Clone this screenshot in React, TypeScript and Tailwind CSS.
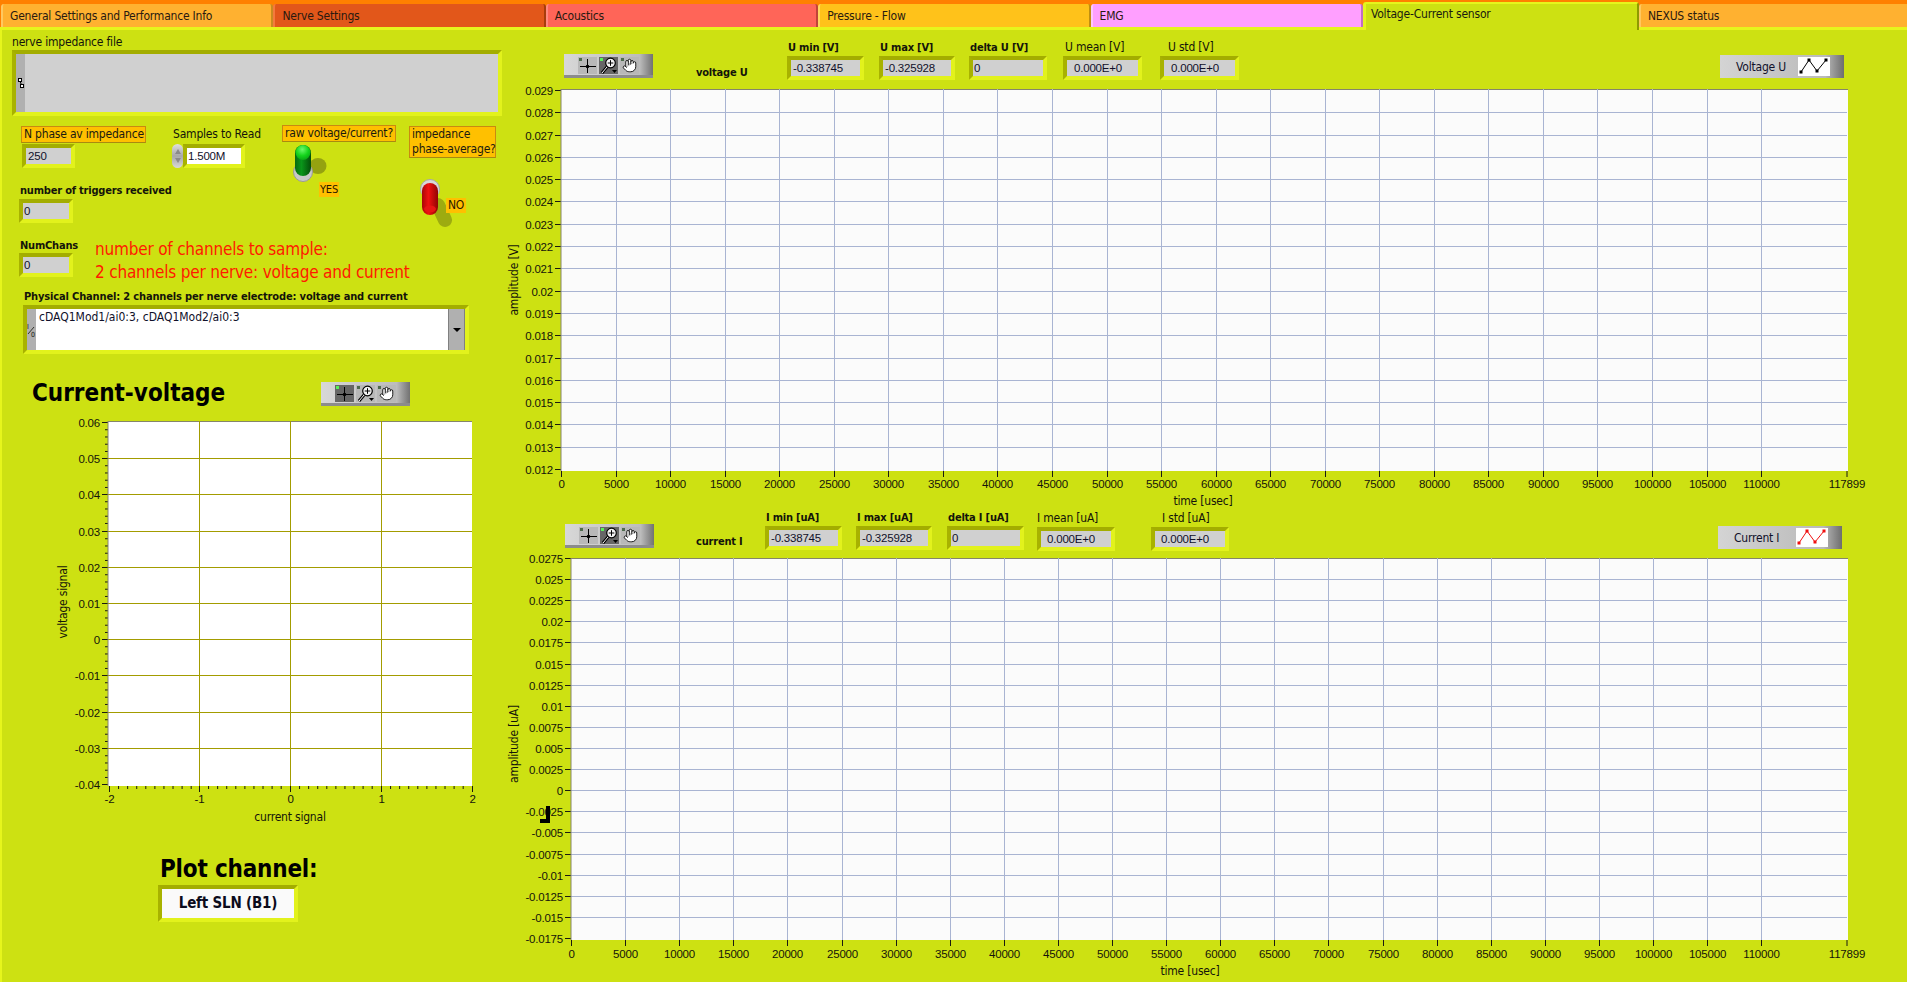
import { Hand } from "lucide-react"
import type { ReactNode } from "react"

const tabs = [
  { name: "General Settings and Performance Info", cls: "bg-[#ffb130] border-l-[#ffc860] border-r-[#c98a20]" },
  { name: "Nerve Settings", cls: "bg-[#e2571a] border-l-[#f47a3c] border-r-[#a83c0c]" },
  { name: "Acoustics", cls: "bg-[#ff6558] border-l-[#ff8a80] border-r-[#c04438]" },
  { name: "Pressure - Flow", cls: "bg-[#ffc21a] border-l-[#ffd860] border-r-[#c08f10]" },
  { name: "EMG", cls: "bg-[#ff9fff] border-l-[#ffc8ff] border-r-[#c070c0]" },
  { name: "Voltage-Current sensor", cls: "" },
  { name: "NEXUS status", cls: "bg-[#ffb130] border-l-[#ffc860] border-r-[#ffb130]" },
]

const digits = "font-['Liberation_Sans',sans-serif] font-stretch-normal"

function Tab({ name, cls }: { name: string; cls: string }) {
  if (!cls) {
    return (
      <div className="relative z-10 -mt-[2px] -mb-[3px] h-[28px] w-[276px] shrink-0 rounded-t-[3px] border-t-[2px] border-l-[3px] border-r-[2px] border-t-[#e6f51c] border-l-[#e6f51c] border-r-[#8f9a00] bg-[#cde112] pl-[5px] pt-[1px] text-[12px] leading-[18px] text-[#1a1a10]">
        {name}
      </div>
    )
  }
  return (
    <div className={"h-[23px] w-[272.4px] shrink-0 rounded-t-[3px] border-l-[2px] border-r-[2px] pl-[7px] pt-[4px] text-[12px] leading-[16px] text-[#2a1a10] " + cls}>
      {name}
    </div>
  )
}

// recessed LabVIEW frame, dark on top/left and light on bottom/right
function Frame({ className, children }: { className: string; children?: ReactNode }) {
  return (
    <div className={"flex border-[4px] border-t-[#a3ad00] border-l-[#a8b200] border-r-[#e2f21c] border-b-[#e2f21c] " + className}>
      {children}
    </div>
  )
}

function Num({ value, className, pad = "pl-[1px]" }: { value: string; className: string; pad?: string }) {
  return (
    <Frame className={className}>
      <div className={"h-full w-full bg-[#d0d0d0] text-[11.5px] leading-[16px] text-[#10102a] " + digits + " " + pad}>{value}</div>
    </Frame>
  )
}

function OrangeLabel({ className, children }: { className: string; children: ReactNode }) {
  return (
    <div className={"whitespace-nowrap border border-[#c98a10] border-b-[#a88a10] bg-[#ffc000] pl-[2px] text-[12px] leading-[15px] text-[#1a1a10] " + className}>
      {children}
    </div>
  )
}

function Crosshair() {
  return (
    <svg width="17" height="15" viewBox="0 0 17 15">
      <path d="M8.5 1V15M1 8.5H17" stroke="#000" strokeWidth="1" />
      <circle cx="8.5" cy="8.5" r="1.8" fill="#000" />
    </svg>
  )
}

function Magnifier() {
  return (
    <svg width="18" height="17" viewBox="0 0 18 17">
      <line x1="7" y1="10" x2="2" y2="16" stroke="#000" strokeWidth="3" />
      <line x1="7" y1="10" x2="2" y2="16" stroke="#fff" strokeWidth="1" />
      <circle cx="10.5" cy="6" r="4.8" fill="#f4f4f4" stroke="#000" strokeWidth="1.2" />
      <path d="M10.5 3.2V8.8M7.7 6H13.3" stroke="#000" strokeWidth="1" />
      <path d="M12 13H17L14.5 16Z" fill="#000" />
    </svg>
  )
}

function Palette({ active, className = "" }: { active: number; className?: string }) {
  const btn = (i: number) =>
    "relative flex h-[17px] w-[19px] items-center justify-center " +
    (active === i ? "bg-[#666666]" : "bg-[#b8b8b8]")
  const dot = (i: number) =>
    "absolute top-[1px] left-[1px] h-[3px] w-[3px] " + (active === i ? "bg-[#5bf05b]" : "bg-[#4e6a4e]")
  return (
    <div className={"flex h-[24px] w-[89px] shrink-0 items-center gap-[2px] border-b-[3px] border-b-[#8c8c8c] bg-linear-to-r from-[#d8d8d8] via-[#bcbcbc] via-85% to-[#727272] pl-[14px] pt-[2px] " + className}>
      <div className={btn(0)}><span className={dot(0)} /><Crosshair /></div>
      <div className={btn(1)}><span className={dot(1)} /><Magnifier /></div>
      <div className={btn(2)}><span className={dot(2)} /><Hand size={15} strokeWidth={1.4} color="#000" fill="#fff" /></div>
    </div>
  )
}

function Legend({ name, color, className }: { name: string; color: string; className: string }) {
  return (
    <div className={"flex h-[23px] w-[124px] shrink-0 items-center bg-linear-to-r from-[#d4d4d4] via-[#bababa] via-85% to-[#6e6e6e] pl-[16px] text-[12px] text-[#10102a] " + className}>
      <span className="w-[62px] whitespace-nowrap">{name}</span>
      <svg width="32" height="19" viewBox="0 0 32 19" className="bg-white">
        <polyline points="3,15 11,3 19,14 28,3" fill="none" stroke={color} strokeWidth="1" />
        {[[3, 15], [11, 3], [19, 14], [28, 3]].map(([x, y]) => (
          <rect key={x} x={x - 1.5} y={y - 1.5} width="3" height="3" fill={color} />
        ))}
      </svg>
    </div>
  )
}

function Stat({ label, value, bold, className, labelCls = "", valueCls, pad }: {
  label: string; value: string; bold?: boolean; className: string; labelCls?: string; valueCls: string; pad?: string
}) {
  return (
    <div className={"shrink-0 " + className}>
      <div className={"h-[16px] whitespace-nowrap leading-[15px] text-[#14140a] " + (bold ? "text-[11px] font-bold " : "text-[12px] ") + labelCls}>{label}</div>
      <Num value={value} className={valueCls} pad={pad} />
    </div>
  )
}

function TimeChart({ oy, h, left, top, bottom, tickTop, tickBottom, px5000, yLabels, yTitle, titleY, timeX, timeY, labelY }: {
  oy: number; h: number; left: number; top: number; bottom: number; tickTop: number; tickBottom: number
  px5000: number; yLabels: string[]; yTitle: string; titleY: number; timeX: number; timeY: number; labelY: number
}) {
  const right = 1847
  const xs = Array.from({ length: 23 }, (_, i) => i * 5000)
  const xPos = (v: number) => Math.round(left + (v / 5000) * px5000)
  const step = (tickBottom - tickTop) / (yLabels.length - 1)
  return (
    <svg width="1407" height={h} viewBox={`500 ${oy} 1407 ${h}`} className="-ml-[10px] block shrink-0 text-[#14140a]">
      <rect x={left} y={top} width={right - left + 1} height={bottom - top} fill="#fbfbfb" />
      <line x1={left} x2={right + 1} y1={top + 0.5} y2={top + 0.5} stroke="#85856a" />
      <g className={digits}>
        {yLabels.map((l, i) => {
          const y = Math.round(tickTop + i * step) + 0.5
          return (
            <g key={l}>
              {i > 0 && i < yLabels.length - 1 && <line x1={left} x2={right} y1={y} y2={y} stroke="#a9b4d2" />}
              <line x1={left - 6} x2={left} y1={y} y2={y} stroke="#1a1a10" />
              <text x={left - 8} y={y + 4} textAnchor="end" fontSize="11.5" fill="currentColor">{l}</text>
            </g>
          )
        })}
        {xs.map((v) => {
          const x = xPos(v) + 0.5
          return (
            <g key={v}>
              {v > 0 && <line x1={x} x2={x} y1={top} y2={bottom} stroke="#a9b4d2" />}
              <line x1={x} x2={x} y1={bottom} y2={bottom + 6} stroke="#1a1a10" />
              {v < 115000 && <text x={x} y={labelY} textAnchor="middle" fontSize="11.5" fill="currentColor">{v}</text>}
            </g>
          )
        })}
        <line x1={right} x2={right} y1={bottom} y2={bottom + 6} stroke="#1a1a10" />
        <text x={right} y={labelY} textAnchor="middle" fontSize="11.5" fill="currentColor">117899</text>
      </g>
      <line x1={left} x2={left} y1={top} y2={bottom} stroke="#85856a" />
      <text x={timeX} y={timeY} textAnchor="middle" fontSize="12" fill="currentColor">time [usec]</text>
      <text transform={`translate(518 ${titleY}) rotate(-90)`} textAnchor="middle" fontSize="12" fill="currentColor">{yTitle}</text>
    </svg>
  )
}

function XYChart() {
  const left = 108, right = 472, top = 421, bottom = 786
  const ys = ["0.06", "0.05", "0.04", "0.03", "0.02", "0.01", "0", "-0.01", "-0.02", "-0.03", "-0.04"]
  const xs = ["-2", "-1", "0", "1", "2"]
  const xStep = 90.75, yStep = 36.2
  return (
    <svg width="508" height="422" viewBox="2 408 508 422" className="block text-[#14140a]">
      <rect x={left} y={top} width={right - left} height={bottom - top} fill="#ffffff" />
      <line x1={left} x2={right} y1={top + 0.5} y2={top + 0.5} stroke="#85856a" />
      <g className={digits}>
        {ys.map((l, i) => {
          const y = Math.round(422 + i * yStep) + 0.5
          return (
            <g key={l}>
              {i > 0 && i < 10 && <line x1={left} x2={right} y1={y} y2={y} stroke="#a39c00" />}
              <line x1={left - 6} x2={left} y1={y} y2={y} stroke="#1a1a10" />
              {i < 10 && [1, 2, 3, 4].map((m) => (
                <line key={m} x1={left - 3} x2={left} y1={y + (m * yStep) / 5} y2={y + (m * yStep) / 5} stroke="#1a1a10" />
              ))}
              <text x={left - 8} y={y + 4} textAnchor="end" fontSize="11.5" fill="currentColor">{l}</text>
            </g>
          )
        })}
        {xs.map((l, i) => {
          const x = Math.round(left + 0.6 + i * xStep) + 0.5
          return (
            <g key={l}>
              {i > 0 && i < 4 && <line x1={x} x2={x} y1={top} y2={bottom} stroke="#a39c00" />}
              <line x1={x} x2={x} y1={bottom} y2={bottom + 6} stroke="#1a1a10" />
              {i < 4 && Array.from({ length: 9 }, (_, m) => (
                <line key={m} x1={x + ((m + 1) * xStep) / 10} x2={x + ((m + 1) * xStep) / 10} y1={bottom} y2={bottom + 3} stroke="#1a1a10" />
              ))}
              <text x={x} y={803} textAnchor="middle" fontSize="11.5" fill="currentColor">{l}</text>
            </g>
          )
        })}
      </g>
      <line x1={left} x2={left} y1={top} y2={bottom} stroke="#85856a" />
      <text x={290} y={821} textAnchor="middle" fontSize="12" fill="currentColor">current signal</text>
      <text transform="translate(67 602) rotate(-90)" textAnchor="middle" fontSize="12" fill="currentColor">voltage signal</text>
    </svg>
  )
}

function GreenToggle() {
  return (
    <svg width="40" height="39" viewBox="0 0 40 39" className="ml-[11px] block">
      <defs>
        <linearGradient id="gl" x1="0" x2="1" y1="0" y2="0">
          <stop offset="0" stopColor="#056a10" /><stop offset="0.4" stopColor="#0a961a" /><stop offset="1" stopColor="#044e0a" />
        </linearGradient>
        <radialGradient id="gh" cx="0.45" cy="0.3" r="0.7">
          <stop offset="0" stopColor="#6cf86c" /><stop offset="0.6" stopColor="#14d41c" /><stop offset="1" stopColor="#0aa816" />
        </radialGradient>
      </defs>
      <ellipse cx="25" cy="23" rx="8.5" ry="8" fill="#95a210" />
      <circle cx="10" cy="29" r="9.5" fill="#c8c8c8" stroke="#9a9a9a" />
      <rect x="2" y="2" width="16" height="31" rx="8" fill="url(#gl)" />
      <circle cx="10" cy="9.5" r="7.5" fill="url(#gh)" />
    </svg>
  )
}

function RedToggle() {
  return (
    <svg width="28" height="52" viewBox="0 0 28 52" className="ml-[9px] block shrink-0 overflow-visible">
      <defs>
        <linearGradient id="rl" x1="0" x2="1" y1="0" y2="0">
          <stop offset="0" stopColor="#a80606" /><stop offset="0.4" stopColor="#f01010" /><stop offset="1" stopColor="#900404" />
        </linearGradient>
      </defs>
      <line x1="20" y1="27" x2="27" y2="42" stroke="#9dab10" strokeWidth="14" strokeLinecap="round" />
      <circle cx="12" cy="11" r="9.5" fill="#d8d8d8" stroke="#a8a8a8" />
      <rect x="4" y="5" width="16" height="32" rx="8" fill="url(#rl)" />
      <ellipse cx="12" cy="31" rx="6" ry="3.5" fill="#e81414" />
    </svg>
  )
}

const uLabels = Array.from({ length: 18 }, (_, i) => (0.029 - i * 0.001).toFixed(3).replace(/0+$/, ""))
const iLabels = Array.from({ length: 19 }, (_, i) => String(Number(((110 - i * 10) * 0.00025).toFixed(4))))

export default function App() {
  return (
    <div className="flex h-screen w-[1907px] flex-col overflow-hidden bg-[#cde112] font-['DejaVu_Sans',sans-serif] font-stretch-condensed tracking-[-0.2px]">
      <div className="flex h-[27px] shrink-0 items-start bg-[#ff8000] pt-[4px] pl-[1px]">
        {tabs.map((t) => <Tab key={t.name} name={t.name} cls={t.cls} />)}
      </div>

      <div className="flex flex-1 border-t-[3px] border-l-[2px] border-t-[#e6f51c] border-l-[#e6f51c]">
        <div className="flex w-[508px] shrink-0 flex-col">
          <div className="ml-[10px] h-[16px] pt-[6px] text-[12px] leading-[12px] text-[#14140a]">nerve impedance file</div>
          <Frame className="mt-[4px] ml-[10px] h-[66px] w-[490px]">
            <div className="flex w-[9px] items-center justify-center bg-[#b0b0b0]">
              <svg width="6" height="10" viewBox="0 0 6 10">
                <rect x="0.5" y="0.5" width="3" height="3" fill="#fff" stroke="#000" />
                <rect x="2.5" y="6.5" width="3" height="3" fill="#fff" stroke="#000" />
                <line x1="2" y1="3" x2="3.5" y2="7" stroke="#000" />
              </svg>
            </div>
            <div className="flex-1 bg-[#d0d0d0]" />
          </Frame>

          <div className="mt-[9px] flex h-[103px] shrink-0">
            <div className="ml-[17px] w-[153px] shrink-0">
              <OrangeLabel className="mt-[1px] ml-[2px] h-[17px] w-[125px]">N phase av impedance</OrangeLabel>
              <Num value="250" className="mt-[1px] ml-[3px] h-[24px] w-[53px]" pad="pl-[2px]" />
              <div className="mt-[15px] ml-[1px] h-[16px] whitespace-nowrap text-[11px] font-bold leading-[15px] text-[#14140a]">number of triggers received</div>
              <Num value="0" className="h-[24px] w-[54px]" pad="pl-[1px]" />
            </div>
            <div className="w-[110px] shrink-0">
              <div className="mt-[1px] ml-[1px] h-[18px] text-[12px] leading-[16px] text-[#14140a]">Samples to Read</div>
              <div className="flex">
                <div className="flex h-[24px] w-[11px] flex-col items-center justify-center gap-[4px] rounded-full bg-linear-to-b from-[#e0e0e0] via-[#a8a8a8] to-[#d8d8d8]">
                  <svg width="6" height="5" viewBox="0 0 6 5"><path d="M3 0L6 5H0Z" fill="#8a8a8a" /></svg>
                  <svg width="6" height="5" viewBox="0 0 6 5"><path d="M3 5L6 0H0Z" fill="#8a8a8a" /></svg>
                </div>
                <Frame className="h-[24px] w-[62px]">
                  <div className={"h-full w-full bg-white pl-[1px] text-[11.5px] leading-[16px] text-[#10102a] " + digits}>1.500M</div>
                </Frame>
              </div>
            </div>
            <div className="w-[127px] shrink-0">
              <OrangeLabel className="h-[17px] w-[114px]">raw voltage/current?</OrangeLabel>
              <div className="mt-[1px]"><GreenToggle /></div>
              <div className="ml-[37px] h-[15px] w-[20px] bg-[#ffc000] text-center text-[11px] leading-[15px] text-[#2a1a00]">YES</div>
            </div>
            <div className="w-[90px] shrink-0">
              <OrangeLabel className="mt-[1px] h-[32px] w-[87px]">impedance<br />phase-average?</OrangeLabel>
              <div className="mt-[20px] flex">
                <RedToggle />
                <div className="relative mt-[20px] h-[15px] w-[20px] bg-[#ffc000] text-center text-[12px] leading-[15px] text-[#2a1a00]">NO</div>
              </div>
            </div>
          </div>

          <div className="mt-[10px] flex h-[46px] shrink-0">
            <div className="ml-[17px] w-[76px] shrink-0">
              <div className="ml-[1px] h-[15px] text-[11px] font-bold leading-[15px] text-[#14140a]">NumChans</div>
              <Num value="0" className="h-[24px] w-[54px]" />
            </div>
            <div className="whitespace-nowrap text-[17px] leading-[23px] text-[#ff1a00]">
              number of channels to sample:<br />2 channels per nerve: voltage and current
            </div>
          </div>

          <div className="mt-[6px] ml-[22px] h-[14px] whitespace-nowrap text-[11px] font-bold leading-[14px] tracking-[-0.15px] text-[#14140a]">Physical Channel: 2 channels per nerve electrode: voltage and current</div>
          <Frame className="mt-[1px] ml-[21px] h-[49px] w-[446px]">
            <div className="flex w-[9px] items-center justify-center bg-[#b0b0b0]">
              <svg width="9" height="16" viewBox="0 0 9 16" className="text-[#14140a]">
                <text x="0" y="7" fontSize="7" fill="currentColor">I</text>
                <line x1="1" y1="12" x2="7" y2="5" stroke="currentColor" strokeWidth="0.8" />
                <text x="4" y="15" fontSize="7" fill="currentColor">0</text>
              </svg>
            </div>
            <div className="flex-1 bg-white pl-[3px] text-[12px] leading-[16px] tracking-normal text-[#10102a]">cDAQ1Mod1/ai0:3, cDAQ1Mod2/ai0:3</div>
            <div className="flex w-[17px] items-center justify-center border-l border-r border-l-[#808080] border-r-[#808080] bg-[#b0b0b0]">
              <svg width="8" height="4" viewBox="0 0 8 4"><path d="M0 0H8L4 4Z" fill="#000" /></svg>
            </div>
          </Frame>

          <div className="mt-[24px] flex h-[30px] shrink-0">
            <div className="ml-[30px] w-[289px] shrink-0 text-[24px] font-bold leading-[30px] tracking-normal text-black">Current-voltage</div>
            <Palette active={0} className="mt-[4px]" />
          </div>

          <XYChart />

          <div className="mt-[25px] ml-[158px] h-[28px] whitespace-nowrap text-[24px] font-bold leading-[28px] text-black">Plot channel:</div>
          <Frame className="mt-[2px] ml-[156px] h-[37px] w-[140px]">
            <div className="h-full w-full bg-[#fafafa] text-center text-[15px] font-bold leading-[28px] text-[#0c0c1c]">Left SLN (B1)</div>
          </Frame>
        </div>

        <div className="relative flex flex-1 flex-col">
          <div className="flex h-[54px] shrink-0 items-start">
            <Palette active={1} className="mt-[24px] ml-[54px]" />
            <div className="mt-[36px] ml-[43px] w-[53px] shrink-0 whitespace-nowrap text-[11px] font-bold leading-[14px] text-[#14140a]">voltage U</div>
            <Stat bold label="U min [V]" value="-0.338745" className="mt-[10px] ml-[38px]" labelCls="pl-[1px]" valueCls="h-[24px] w-[77px]" pad="pl-[2px]" />
            <Stat bold label="U max [V]" value="-0.325928" className="mt-[10px] ml-[15px]" labelCls="pl-[1px]" valueCls="h-[24px] w-[76px]" pad="pl-[2px]" />
            <Stat bold label="delta U [V]" value="0" className="mt-[10px] ml-[14px]" labelCls="pl-[1px]" valueCls="h-[24px] w-[78px]" pad="pl-[1px]" />
            <Stat label="U mean [V]" value="0.000E+0" className="mt-[10px] ml-[16px]" labelCls="pl-[2px]" valueCls="h-[24px] w-[79px]" pad="pl-[7px]" />
            <Stat label="U std [V]" value="0.000E+0" className="mt-[10px] ml-[18px]" labelCls="pl-[8px]" valueCls="h-[24px] w-[79px]" pad="pl-[7px]" />
            <Legend name="Voltage U" color="#000000" className="mt-[25px] ml-[481px]" />
          </div>
          <TimeChart oy={84} h={426} left={561} top={89} bottom={471} tickTop={90} tickBottom={469} px5000={54.55} yLabels={uLabels} yTitle="amplitude [V]" titleY={280} timeX={1203} timeY={505} labelY={488} />

          <div className="flex h-[42px] shrink-0 items-start">
            <Palette active={1} className="mt-[14px] ml-[55px]" />
            <div className="mt-[25px] ml-[42px] w-[50px] shrink-0 whitespace-nowrap text-[11px] font-bold leading-[14px] text-[#14140a]">current I</div>
            <Stat bold label="I min [uA]" value="-0.338745" className="ml-[19px]" labelCls="pl-[1px]" valueCls="h-[24px] w-[77px]" pad="pl-[2px]" />
            <Stat bold label="I max [uA]" value="-0.325928" className="ml-[14px]" labelCls="pl-[1px]" valueCls="h-[24px] w-[76px]" pad="pl-[2px]" />
            <Stat bold label="delta I [uA]" value="0" className="ml-[15px]" labelCls="pl-[1px]" valueCls="h-[24px] w-[77px]" pad="pl-[1px]" />
            <Stat label="I mean [uA]" value="0.000E+0" className="mt-[1px] ml-[13px]" valueCls="h-[24px] w-[78px]" pad="pl-[6px]" />
            <Stat label="I std [uA]" value="0.000E+0" className="mt-[1px] ml-[36px]" labelCls="pl-[11px]" valueCls="h-[24px] w-[78px]" pad="pl-[6px]" />
            <Legend name="Current I" color="#f01010" className="mt-[16px] ml-[489px]" />
          </div>
          <TimeChart oy={552} h={430} left={571} top={558} bottom={940} tickTop={558} tickBottom={938} px5000={54.1} yLabels={iLabels} yTitle="amplitude [uA]" titleY={744} timeX={1190} timeY={975} labelY={958} />

          <div className="absolute top-[776px] left-[30px] h-[17px] w-[10px] border-r-[4px] border-b-[4px] border-black" />
        </div>
      </div>
    </div>
  )
}
